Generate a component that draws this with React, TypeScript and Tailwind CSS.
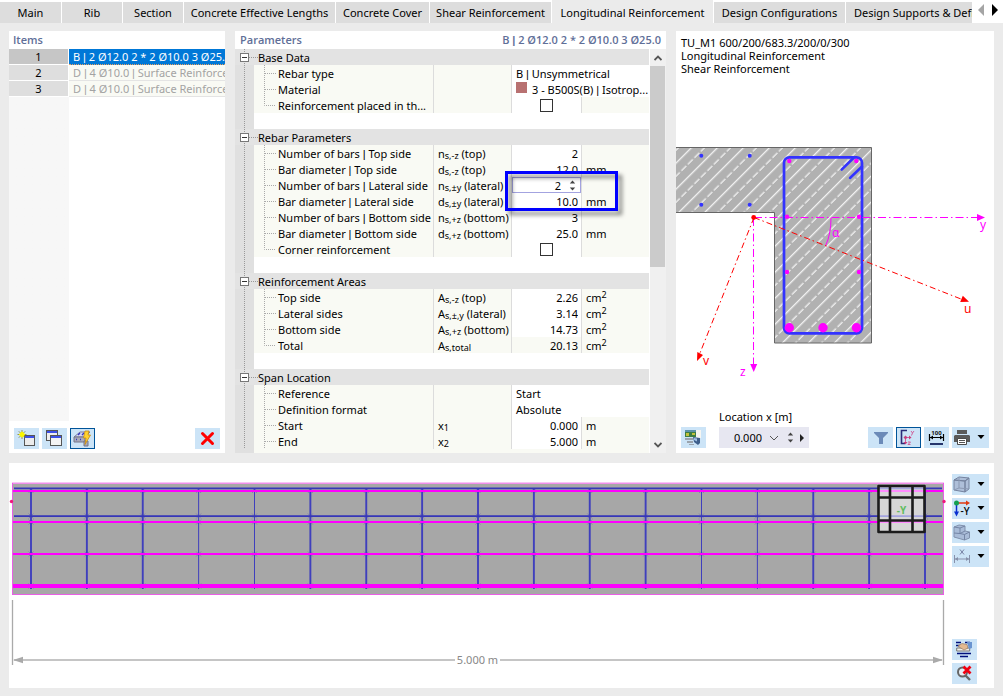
import React, { useState } from "react";

type Glyph = { className?: string };

/* Text whose "|" separators are set in a narrow bar glyph. */
function Piped({ text }: { text: string }) {
  return (
    <>
      {text.split("|").map((part, i) => (
        <React.Fragment key={i}>
          {i > 0 && <span className="font-['Liberation_Sans',sans-serif] leading-none">|</span>}
          {part}
        </React.Fragment>
      ))}
    </>
  );
}

/* ---------- tab strip ---------- */

const TABS = [
  { label: "Main", width: "w-[61px]" },
  { label: "Rib", width: "w-[60px]" },
  { label: "Section", width: "w-[60px]" },
  { label: "Concrete Effective Lengths", width: "w-[151px]" },
  { label: "Concrete Cover", width: "w-[93px]" },
  { label: "Shear Reinforcement", width: "w-[121px]" },
  { label: "Longitudinal Reinforcement", width: "w-[161px]" },
  { label: "Design Configurations", width: "w-[131px]" },
];

function TabStrip() {
  const [active, setActive] = useState(6);
  return (
    <nav className="flex h-[23px] items-end gap-px bg-white">
      {TABS.map((tab, i) => (
        <button
          key={tab.label}
          type="button"
          aria-pressed={i === active}
          onClick={() => setActive(i)}
          className={`${tab.width} shrink-0 text-center whitespace-nowrap ${
            i === active ? "h-[23px] bg-[#ebebeb] pt-[2px]" : "h-[21px] bg-[#dddddd]"
          }`}
        >
          {tab.label}
        </button>
      ))}
      <button
        type="button"
        className="h-[21px] min-w-0 flex-1 overflow-hidden bg-[#dddddd] pl-2 text-left whitespace-nowrap"
      >
        Design Supports &amp; Deflection
      </button>
      <div className="flex h-[23px] w-[30px] shrink-0 items-center justify-between pr-1 pb-1 pl-1">
        <button type="button" aria-label="Previous tabs">
          <svg width="8" height="12" viewBox="0 0 8 12">
            <path d="M7 0v12L1 6z" fill="#a5a5a5" />
          </svg>
        </button>
        <button type="button" aria-label="Next tabs">
          <svg width="8" height="12" viewBox="0 0 8 12">
            <path d="M1 0v12l6-6z" fill="#000" />
          </svg>
        </button>
      </div>
    </nav>
  );
}

/* ---------- buttons and glyphs ---------- */

function ToolButton({
  label,
  active = false,
  menu = false,
  children,
}: {
  label: string;
  active?: boolean;
  menu?: boolean;
  children: React.ReactNode;
}) {
  return (
    <button
      type="button"
      aria-label={label}
      className={`flex h-[21px] shrink-0 items-center bg-[#cce4f7] ${
        menu ? "w-[37px] justify-between pr-1 pl-px" : "w-[25px] justify-center"
      } ${active ? "border border-[#005499]" : ""}`}
    >
      {children}
      {menu && (
        <svg width="8" height="6" viewBox="0 0 8 6" className="mb-px">
          <path d="M0.500 1h7L4 5z" fill="#000" />
        </svg>
      )}
    </button>
  );
}

const NewItemIcon = () => (
  <svg width="19" height="17" viewBox="0 0 19 17">
    <rect x="7.500" y="5.500" width="10" height="10" fill="#ececec" stroke="#555" />
    <path d="M8 7h9" stroke="#3c50e8" strokeWidth="2" />
    <path d="M5 0v9M.5 4.500h9M1.800 1.300l6.400 6.400M8.200 1.300L1.800 7.700" stroke="#8a8a4a" strokeWidth=".9" />
    <circle cx="5" cy="4.500" r="2.500" fill="#fbf500" />
    <path d="M5 1.500v6M2 4.500h6" stroke="#fbf500" strokeWidth="1.200" />
  </svg>
);

const CopyIcon = () => (
  <svg width="19" height="17" viewBox="0 0 19 17">
    <rect x="1.500" y="0.500" width="11" height="10" fill="#eee" stroke="#555" />
    <path d="M2 2h10" stroke="#3c50e8" strokeWidth="2" />
    <rect x="5.500" y="5.500" width="11" height="10" fill="#f3f3f3" stroke="#555" />
    <path d="M6 7h10" stroke="#3c50e8" strokeWidth="2" />
  </svg>
);

const SurfaceIcon = () => (
  <svg width="19" height="17" viewBox="0 0 19 17">
    <path d="M1 7l6-5h10l-5 5z" fill="#d5d8ef" stroke="#777c9c" />
    <path d="M1 7h11v5H1z" fill="#a9abb9" stroke="#73758a" />
    <path d="M5 5l2-2M9 5l2-2M3 9.500h1M7 9.500h1M11 14h2" stroke="#3434c8" strokeWidth="1.400" />
    <path d="M11 11h4v5h-4z" fill="#a9abb9" stroke="#73758a" />
    <path d="M12 1h4l-1 4h2.500L12 14.500l1-6.500h-2.500z" fill="#ffd22e" stroke="#c78a14" strokeWidth=".8" />
  </svg>
);

const DeleteIcon = () => (
  <svg width="15" height="15" viewBox="0 0 15 15">
    <path d="M2.500 2.500l10 10M12.500 2.500l-10 10" stroke="#f00" strokeWidth="3" strokeLinecap="round" />
  </svg>
);

const RenderIcon = () => (
  <svg width="17" height="17" viewBox="0 0 17 17">
    <rect x="0" y="1" width="11" height="7" fill="#3f7d44" />
    <path d="M0 1h11v2H0z" fill="#5d92a8" />
    <path d="M1 4h3v3H1zM7 4h3v2H7z" fill="#c2c33d" />
    <path d="M11 1h5v8h-5z" fill="#f6f6f2" />
    <path d="M0 9h8v2H0zM2 12h6v2H2zM4 15h5v1H4z" fill="#9aa3ad" />
    <path d="M8 8l7 1v5l-2 2-4-3z" fill="#3e5f8c" />
    <path d="M9 9l3 .6v3L9 11z" fill="#9fbfe3" />
  </svg>
);

const FilterIcon = () => (
  <svg width="14" height="14" viewBox="0 0 14 14">
    <path d="M0 1h14v1L9 7v6H5V7L0 2z" fill="#6b8ab8" />
  </svg>
);

const AxesIcon = () => (
  <svg width="17" height="17" viewBox="0 0 17 17">
    <path d="M7 1.500H1.500v13H5" fill="none" stroke="#2b2b78" strokeWidth="1.600" />
    <path d="M4 8.500h6M5.500 8v6" stroke="#d0609a" />
    <path d="M3.500 8.500l2-2 2 2-2 2zM11.500 8.500l-2.500-2v4zM5.500 15.500l-2-2.500h4z" fill="#c83e7c" />
    <path d="M11 2l1.500 2L14 2M12.500 4l-1 2.500M8 13h2.500L8 15.500h2.500" fill="none" stroke="#d0609a" />
  </svg>
);

const DimensionIcon = () => (
  <svg width="17" height="17" viewBox="0 0 17 17">
    <text x="8.500" y="5.500" textAnchor="middle" fontSize="6" fontWeight="700" fill="#111">100</text>
    <path d="M1.500 5v7M15.500 5v7M2 8.500h13" stroke="#000" strokeWidth="1.200" />
    <path d="M2 8.500l3-2v4zM15 8.500l-3-2v4z" fill="#000" />
    <path d="M2 15h13" stroke="#25346b" strokeWidth="2" />
  </svg>
);

const PrintIcon = () => (
  <svg width="18" height="17" viewBox="0 0 18 17">
    <path d="M4 1h10v4H4z" fill="#5a5a5a" />
    <path d="M2 6h14l1 1v6H1V7z" fill="#5a5a5a" />
    <path d="M4.500 9.500h9v6h-9z" fill="#fff" stroke="#4b4b4b" />
    <path d="M6 11.500h6M6 13.500h6" stroke="#555" />
  </svg>
);

const CubeIcon = () => (
  <svg width="18" height="17" viewBox="0 0 18 17">
    <path d="M1 4l5-3 10 1-4 3zM1 4l11 1v11L1 14zM12 5l4-3v11l-4 3z" fill="#aebfd9" stroke="#75839f" strokeLinejoin="round" />
    <path d="M6 1v11l10 1M6 12l-5 2" fill="none" stroke="#8b99b3" />
  </svg>
);

const ViewAxisIcon = () => (
  <svg width="18" height="17" viewBox="0 0 18 17">
    <path d="M4 3h10" stroke="#e03a10" strokeWidth="1.500" />
    <path d="M17 3l-4-2.500v5z" fill="#e03a10" />
    <path d="M3.500 4v8" stroke="#0a2fd0" strokeWidth="1.500" />
    <path d="M3.500 16.500L1 11.500h5z" fill="#0a2fd0" />
    <circle cx="3.500" cy="3" r="2.500" fill="#14a050" />
    <text x="7.500" y="15" fontSize="10" fontWeight="500" fill="#000">-Y</text>
  </svg>
);

const SolidIcon = () => (
  <svg width="18" height="17" viewBox="0 0 18 17">
    <path d="M1 3l5-2 6 1v5l4.500 1v6l-5 2L1 13z" fill="#a9bcd8" stroke="#8191ad" strokeLinejoin="round" />
    <path d="M1 3l6 1v5.500l4.500 1V16M7 4l5-2M7 9.500L12 7M11.500 10.500l5-2.500M1 9l6 .5" fill="none" stroke="#7485a5" />
  </svg>
);

const SpanIcon = () => (
  <svg width="18" height="17" viewBox="0 0 18 17">
    <path d="M1.500 7v8M16.500 7v8M2 11h14" stroke="#8791ab" />
    <path d="M2 11l3-2v4zM16 11l-3-2v4z" fill="#8791ab" />
    <path d="M7 1.500l4 5M11 1.500l-4 5" stroke="#7681a3" />
  </svg>
);

const ReportIcon = () => (
  <svg width="17" height="17" viewBox="0 0 17 17">
    <path d="M0 1.500h5M9 1.500h5M0 4.500h4M1 12.500h14M4 15.500h8" stroke="#00107c" strokeWidth="1.400" />
    <path d="M.7 7h13v3H.7z" fill="#f1efe7" stroke="#777" />
    <path d="M2 5l4-2.500 5 1L12 7 8 9 4 6.500z" fill="#e3b990" stroke="#9a7a62" strokeWidth=".7" />
    <path d="M11 1h5v6l-3 1z" fill="#6a94d0" />
  </svg>
);

const ZoomResetIcon = () => (
  <svg width="17" height="17" viewBox="0 0 17 17">
    <circle cx="6.500" cy="7" r="4.500" fill="#e7eef5" stroke="#666" strokeWidth="2" />
    <path d="M9.500 10.500l4.500 4.500" stroke="#666" strokeWidth="2.400" />
    <path d="M7.500 1.500l7 7M14.500 1.500l-7 7" stroke="#f00010" strokeWidth="2.800" />
  </svg>
);

const SpinArrows = ({ className = "" }: Glyph) => (
  <svg width="7" height="13" viewBox="0 0 7 13" className={className}>
    <path d="M3.500 1.500L6.200 4.500H.8zM3.500 11.500L6.200 8.500H.8z" fill="#444" />
  </svg>
);

/* ---------- items ---------- */

const ITEMS = [
  "B | 2 Ø12.0 2 * 2 Ø10.0 3 Ø25.0",
  "D | 4 Ø10.0 | Surface Reinforcement",
  "D | 4 Ø10.0 | Surface Reinforcement",
];

function ItemsPanel() {
  const [selected, setSelected] = useState(0);
  return (
    <section className="flex min-w-0 flex-col bg-white">
      <h2 className="h-[18px] pl-1 font-['Open_Sans','Noto_Sans',sans-serif] leading-[18px] font-semibold text-[#5f6f98]">
        Items
      </h2>
      <div className="flex-1 bg-linear-to-r from-[#f7f7f7] from-[60px] to-white to-[60px]">
        <table className="w-full table-fixed border-separate border-spacing-0 leading-[15px]">
          <colgroup>
            <col className="w-[60px]" />
            <col />
          </colgroup>
          <tbody>
            {ITEMS.map((name, i) => (
              <tr key={i} onClick={() => setSelected(i)}>
                <th
                  scope="row"
                  className={`h-4 border-r border-b border-white p-0 text-center font-normal ${
                    i === selected ? "bg-[#c6c6c6]" : "bg-[#dedede]"
                  }`}
                >
                  {i + 1}
                </th>
                <td
                  className={`h-4 overflow-hidden border-b p-0 pl-1 whitespace-nowrap ${
                    i === selected
                      ? "border-dotted border-[#e8a060] bg-[#0078d7] text-white"
                      : "border-[#e4e4e4] bg-[#f9faf4] text-[#a3a3a3]"
                  }`}
                >
                  <Piped text={name} />
                </td>
              </tr>
            ))}
          </tbody>
        </table>
      </div>
      <div className="flex gap-[3px] px-[5px] pt-[7px] pb-1">
        <ToolButton label="New"><NewItemIcon /></ToolButton>
        <ToolButton label="Copy"><CopyIcon /></ToolButton>
        <ToolButton label="Surface reinforcement" active><SurfaceIcon /></ToolButton>
        <span className="flex-1" />
        <ToolButton label="Delete"><DeleteIcon /></ToolButton>
      </div>
    </section>
  );
}

/* ---------- parameters ---------- */

type Row = {
  label: string;
  sym?: [string, string, string?];
  value?: string;
  unit?: string;
  kind?: "text" | "material" | "check" | "spin" | "readonly";
};

const GROUPS: { title: string; rows: Row[]; open?: boolean }[] = [
  {
    title: "Base Data",
    rows: [
      { label: "Rebar type", value: "B | Unsymmetrical", kind: "text" },
      { label: "Material", value: "3 - B500S(B) | Isotrop...", kind: "material" },
      { label: "Reinforcement placed in th...", kind: "check" },
    ],
  },
  {
    title: "Rebar Parameters",
    rows: [
      { label: "Number of bars | Top side", sym: ["n", "s,-z", "(top)"], value: "2" },
      { label: "Bar diameter | Top side", sym: ["d", "s,-z", "(top)"], value: "12.0", unit: "mm" },
      { label: "Number of bars | Lateral side", sym: ["n", "s,±y", "(lateral)"], value: "2", kind: "spin" },
      { label: "Bar diameter | Lateral side", sym: ["d", "s,±y", "(lateral)"], value: "10.0", unit: "mm" },
      { label: "Number of bars | Bottom side", sym: ["n", "s,+z", "(bottom)"], value: "3" },
      { label: "Bar diameter | Bottom side", sym: ["d", "s,+z", "(bottom)"], value: "25.0", unit: "mm" },
      { label: "Corner reinforcement", kind: "check" },
    ],
  },
  {
    title: "Reinforcement Areas",
    rows: [
      { label: "Top side", sym: ["A", "s,-z", "(top)"], value: "2.26", unit: "cm2" },
      { label: "Lateral sides", sym: ["A", "s,±,y", "(lateral)"], value: "3.14", unit: "cm2" },
      { label: "Bottom side", sym: ["A", "s,+z", "(bottom)"], value: "14.73", unit: "cm2" },
      { label: "Total", sym: ["A", "s,total"], value: "20.13", unit: "cm2", kind: "readonly" },
    ],
  },
  {
    title: "Span Location",
    open: true,
    rows: [
      { label: "Reference", value: "Start", kind: "text" },
      { label: "Definition format", value: "Absolute", kind: "text" },
      { label: "Start", sym: ["x", "1"], value: "0.000", unit: "m" },
      { label: "End", sym: ["x", "2"], value: "5.000", unit: "m" },
    ],
  },
];

const Gutter = () => (
  <td className="bg-[#e0e0e0] p-0">
    <svg width="19" height="16" viewBox="0 0 19 16" className="block">
      <path d="M9.500 0v16" stroke="#999" strokeDasharray="1 1" />
    </svg>
  </td>
);

function ValueCells({ row, id }: { row: Row; id: string }) {
  if (row.kind === "text") {
    return (
      <td colSpan={2} className="bg-white p-0 pt-px pl-1">
        <Piped text={row.value ?? ""} />
      </td>
    );
  }
  if (row.kind === "material") {
    return (
      <td colSpan={2} className="bg-white p-0 pt-px pl-1">
        <span className="flex items-start gap-[5px]">
          <span className="h-[11px] w-[11px] shrink-0 bg-[#b87171]" />
          <span><Piped text={row.value ?? ""} /></span>
        </span>
      </td>
    );
  }
  return (
    <>
      <td className={`relative border-r border-[#dcdcdc] p-0 ${row.kind === "readonly" ? "bg-[#f9faf4]" : "bg-white"}`}>
        {row.kind === "check" && (
          <input
            id={id}
            type="checkbox"
            className="mx-auto block h-[13px] w-[13px] appearance-none border border-[#333] bg-white checked:bg-[#333]"
          />
        )}
        {row.kind === "spin" && (
          <>
            <span className="flex h-4 items-center border border-[#a3a3e0]">
              <input
                id={id}
                defaultValue={row.value}
                className="h-[14px] min-w-0 flex-1 bg-transparent pt-px pr-2 text-right leading-[13px] outline-none"
              />
              <button type="button" aria-label="Change number of bars" className="flex pr-1">
                <SpinArrows />
              </button>
            </span>
            <span className="pointer-events-none absolute -top-[6px] -left-[7px] z-10 h-10 w-[113px] border-3 border-[#0000ff] drop-shadow-[4px_4px_2px_rgba(0,0,0,0.5)]" />
          </>
        )}
        {!row.kind && (
          <input
            id={id}
            defaultValue={row.value}
            className="block h-4 w-full bg-transparent pt-px pr-[3px] text-right leading-[15px] outline-none"
          />
        )}
        {row.kind === "readonly" && <output id={id} className="block pt-px pr-[3px] text-right">{row.value}</output>}
      </td>
      <td className="bg-[#f9faf4] p-0 pt-px pl-1">
        {row.unit === "cm2" ? (
          <>cm<sup className="text-[9px]">2</sup></>
        ) : (
          row.unit
        )}
      </td>
    </>
  );
}

function ParametersPanel() {
  return (
    <section className="min-w-0 bg-white">
      <header className="flex h-[18px] justify-between px-[5px] font-['Open_Sans','Noto_Sans',sans-serif] leading-[18px] font-semibold text-[#5f6f98]">
        <h2>Parameters</h2>
        <span><Piped text="B | 2 Ø12.0 2 * 2 Ø10.0 3 Ø25.0" /></span>
      </header>
      <div className="flex h-[404px]">
        <div className="min-w-0 flex-1 overflow-hidden bg-linear-to-r from-[#e0e0e0] from-[19px] to-[#f9faf4] to-[19px]">
          <table className="w-full table-fixed border-separate border-spacing-0 leading-[15px] whitespace-nowrap">
            <colgroup>
              <col className="w-[19px]" />
              <col />
              <col className="w-[78px]" />
              <col className="w-[70px]" />
              <col className="w-[67px]" />
            </colgroup>
            {GROUPS.map((group) => (
              <tbody key={group.title}>
                <tr>
                  <th scope="rowgroup" colSpan={5} className="h-4 bg-[#e3e3e3] p-0 text-left font-normal">
                    <button type="button" aria-expanded="true" className="flex h-4">
                      <svg width="23" height="16" viewBox="0 0 23 16">
                        <path d="M9.500 0v16M14 8.500h9" stroke="#999" strokeDasharray="1 1" />
                        <rect x="5.500" y="4.500" width="8" height="8" fill="#fff" stroke="#777" />
                        <path d="M7 8.500h5" stroke="#333" />
                      </svg>
                      <span className="pt-px">{group.title}</span>
                    </button>
                  </th>
                </tr>
                {group.rows.map((row, i) => {
                  const id = `${group.title}-${row.label}`.replace(/\W+/g, "-");
                  const last = i === group.rows.length - 1 && !group.open;
                  return (
                    <tr key={row.label}>
                      <Gutter />
                      <td className="h-4 border-r border-[#dcdcdc] bg-[#f9faf4] p-0">
                        <label htmlFor={id} className="flex">
                          <svg width="24" height="16" viewBox="0 0 24 16" className="shrink-0">
                            <path
                              d={last ? "M10.500 0v8.500h11" : "M10.500 0v16M11 8.500h11"}
                              fill="none"
                              stroke="#aaa"
                              strokeDasharray="1 1"
                            />
                          </svg>
                          <span className="pt-px"><Piped text={row.label} /></span>
                        </label>
                      </td>
                      <td className="border-r border-[#dcdcdc] bg-[#f9faf4] p-0 pt-px pl-1">
                        {row.sym && (
                          <>
                            {row.sym[0]}
                            <sub className="-bottom-px text-[9px]">{row.sym[1]}</sub> {row.sym[2]}
                          </>
                        )}
                      </td>
                      <ValueCells row={row} id={id} />
                    </tr>
                  );
                })}
                {!group.open && (
                  <tr>
                    <Gutter />
                    <td colSpan={4} className="h-4 bg-white p-0" />
                  </tr>
                )}
              </tbody>
            ))}
          </table>
        </div>
        <div className="flex w-[17px] flex-col border-l border-white bg-[#f0f0f0]">
          <button type="button" aria-label="Scroll up" className="flex h-[17px] items-center justify-center">
            <svg width="8" height="8" viewBox="0 0 8 8">
              <path d="M.5 6L4 2.500 7.500 6" fill="none" stroke="#555" strokeWidth="1.800" />
            </svg>
          </button>
          <div className="mr-px h-[201px] bg-[#cbcbcb]" />
          <div className="flex-1" />
          <button type="button" aria-label="Scroll down" className="flex h-[17px] items-center justify-center">
            <svg width="8" height="8" viewBox="0 0 8 8">
              <path d="M.5 2L4 5.500 7.500 2" fill="none" stroke="#555" strokeWidth="1.800" />
            </svg>
          </button>
        </div>
      </div>
    </section>
  );
}

/* ---------- cross-section ---------- */

const BLUE_DOTS = [[701.3, 155.7], [749.7, 155.7], [701.3, 204.7], [749.7, 204.7]];
const LINK_DOTS = [[789.3, 161], [856.3, 161], [787, 216.7], [859, 216.7], [787, 272], [859, 272]];

function CrossSection() {
  return (
    <svg viewBox="676 75 318 334" className="block w-full" role="img" aria-label="Cross-section">
      <defs>
        <pattern id="hatch" width="18.400" height="18.400" patternUnits="userSpaceOnUse" patternTransform="rotate(45)">
          <path d="M4.600 0v18.400" stroke="#fff" strokeWidth="1.100" />
          <path d="M13.800 0v18.400" stroke="#fff" strokeWidth="1.100" strokeDasharray="7 2.200" />
        </pattern>
      </defs>
      <path d="M670 147.500H871.500V343H774.500V212.500H670z" fill="#b1b1b1" />
      <path d="M670 147.500H871.500V343H774.500V212.500H670z" fill="url(#hatch)" stroke="#666" />
      <rect x="784" y="157.300" width="78" height="176" rx="5.500" fill="none" stroke="#3333ff" strokeWidth="2.700" />
      <path d="M841.700 169.700L853.500 158M850 178L862 166.500" stroke="#3333ff" strokeWidth="2.500" strokeLinecap="round" />
      {BLUE_DOTS.map(([x, y]) => <circle key={`${x}-${y}`} cx={x} cy={y} r="2" fill="#3333ff" />)}
      {LINK_DOTS.map(([x, y]) => <circle key={`${x}-${y}`} cx={x} cy={y} r="2.200" fill="#f0f" />)}
      {[789.3, 823, 856.5].map((x) => <circle key={x} cx={x} cy="327.700" r="4.700" fill="#f0f" />)}
      <g fill="none" stroke="#f0f">
        <path d="M754 217.500H978M753.500 218V364" strokeDasharray="8 3 1.500 3" />
        <path d="M831 218q0 16-5.500 28" />
      </g>
      <path d="M985 217.500l-8-3.500v7zM753.700 372l-3.500-8h7z" fill="#f0f" />
      <path d="M754 217.500L961 299M754 217.500L700 353" fill="none" stroke="#f00" strokeDasharray="6 3 1.500 3" />
      <path d="M969 301.700l-6.200-6-2.600 6.300zM697 361l6-6-5.700-3z" fill="#f00" />
      <circle cx="753.700" cy="217.500" r="2.400" fill="#f00" />
      <g fontSize="12" fill="#f0f">
        <text x="980" y="229">y</text>
        <text x="740" y="376">z</text>
        <text x="832" y="237">α</text>
        <text x="964" y="313" fill="#f00">u</text>
        <text x="703" y="365" fill="#f00">v</text>
      </g>
    </svg>
  );
}

function SectionPanel() {
  return (
    <section className="flex min-w-0 flex-col justify-between overflow-hidden bg-white">
      <div>
        <p className="px-[5px] pt-[5px] leading-[13px]">
          TU_M1 600/200/683.3/200/0/300
          <br />
          Longitudinal Reinforcement
          <br />
          Shear Reinforcement
        </p>
        <CrossSection />
      </div>
      <div className="flex items-end gap-[3px] px-[5px] pb-[5px]">
        <ToolButton label="Render"><RenderIcon /></ToolButton>
        <div className="ml-[10px]">
          <label htmlFor="location" className="block pb-[3px] leading-[14px]">Location x [m]</label>
          <div className="flex h-[21px] w-[90px] items-center bg-[#e7e7f1] pr-1">
            <input id="location" defaultValue="0.000" className="w-[43px] min-w-0 bg-transparent pt-px text-right outline-none" />
            <svg width="10" height="6" viewBox="0 0 10 6" className="ml-[7px]">
              <path d="M1 1l4 4 4-4" fill="none" stroke="#555" />
            </svg>
            <SpinArrows className="mr-1 ml-2" />
            <svg width="6" height="8" viewBox="0 0 6 8" className="ml-px">
              <path d="M1 0v8l4-4z" fill="#222" />
            </svg>
          </div>
        </div>
        <span className="flex-1" />
        <ToolButton label="Filter"><FilterIcon /></ToolButton>
        <ToolButton label="Show axes" active><AxesIcon /></ToolButton>
        <ToolButton label="Show dimensions"><DimensionIcon /></ToolButton>
        <ToolButton label="Print" menu><PrintIcon /></ToolButton>
      </div>
    </section>
  );
}

/* ---------- side view ---------- */

const STIRRUPS = Array.from({ length: 17 }, (_, i) => 31 + i * 55.875);
const THIN = [3, 4, 12, 13];

function BeamView() {
  return (
    <svg viewBox="9 463 943 225" className="block min-w-0 flex-1" role="img" aria-label="Side view of the beam, 5.000 m">
      <rect x="12" y="483" width="932" height="112" fill="#a7a7a7" />
      {STIRRUPS.map((x, i) => (
        <g key={x}>
          <path d={`M${x} 488V589`} stroke="#3f3fbd" strokeWidth={THIN.includes(i) ? 1 : 1.9} />
          {[490.5, 516, 522, 554, 586].map((y) => (
            <path key={y} d={`M${x - 2.5} ${y - 2.5}l5 5m0-5l-5 5`} stroke="#5b5bb0" strokeWidth=".8" opacity=".6" />
          ))}
        </g>
      ))}
      <path d="M14 488.300H942M14 516.200H942" stroke="#3636b8" strokeWidth="1.800" />
      <path d="M12 491H944M12 522H944M12 554H944" stroke="#f0f" strokeWidth="2" />
      <path d="M12 586H944" stroke="#f0f" strokeWidth="4" />
      <path d="M12 483.200H944" stroke="#f08fea" strokeWidth="1.500" />
      <path d="M12.500 483V595M943.500 483V595M12 594.500H944" stroke="#e95fe5" />
      <circle cx="11.500" cy="501.500" r="1.700" fill="#f0187c" />
      <circle cx="944" cy="501.500" r="1.700" fill="#f0187c" />

      <g>
        <rect x="878.500" y="486.500" width="46" height="45" fill="#fff" fillOpacity=".55" />
        <path
          d="M878.500 486h46v46h-46zM890 486v46M912.500 486v46M878.500 497.500h46M878.500 520.500h46"
          fill="none"
          stroke="#1c1c1c"
          strokeWidth="2.600"
          strokeLinejoin="round"
        />
        <text x="901.500" y="513.500" textAnchor="middle" fontSize="10" fontWeight="700" fill="#62bd62">-Y</text>
      </g>

      <path d="M12.500 600V665M943.500 600V665" stroke="#aaa" strokeWidth="1.300" />
      <path d="M14 660H455M500 660H942" stroke="#b2b2b2" strokeWidth="1.500" />
      <path d="M13 660l10-3.200v6.400zM943 660l-10-3.200v6.400z" fill="#aaa" />
      <text x="477.500" y="664" textAnchor="middle" fontSize="11" fill="#888">5.000 m</text>
    </svg>
  );
}

function SideViewPanel() {
  return (
    <section className="mx-[9px] mt-[10px] flex bg-white pr-[5px]">
      <BeamView />
      <div className="flex w-[37px] shrink-0 flex-col gap-[3px] pt-[11px] pb-1">
        <ToolButton label="Projection" menu><CubeIcon /></ToolButton>
        <ToolButton label="View direction" menu><ViewAxisIcon /></ToolButton>
        <ToolButton label="Display mode" menu><SolidIcon /></ToolButton>
        <ToolButton label="Dimension lines" menu><SpanIcon /></ToolButton>
        <span className="flex-1" />
        <ToolButton label="Report"><ReportIcon /></ToolButton>
        <ToolButton label="Reset zoom"><ZoomResetIcon /></ToolButton>
      </div>
    </section>
  );
}

export default function App() {
  return (
    <div className="min-h-screen bg-[#ebebeb] font-['Noto_Sans','Open_Sans',sans-serif] text-[11px] leading-4 text-black">
      <TabStrip />
      <main>
        <div className="mx-[9px] mt-2 grid grid-cols-[216fr_431fr_318fr] gap-[10px]">
          <ItemsPanel />
          <ParametersPanel />
          <SectionPanel />
        </div>
        <SideViewPanel />
      </main>
    </div>
  );
}
